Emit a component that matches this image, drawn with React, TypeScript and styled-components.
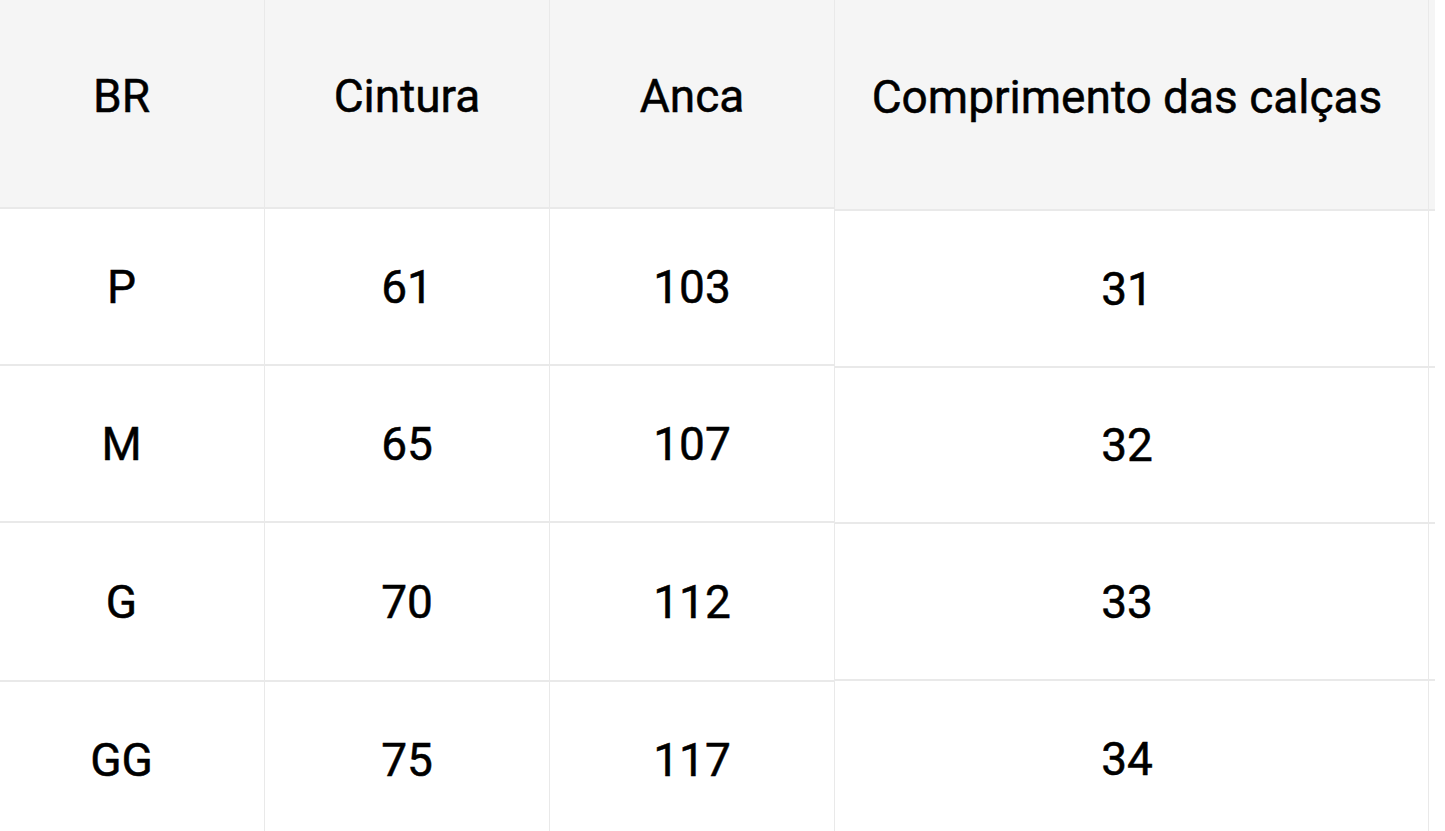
import React from "react";
import styled, { createGlobalStyle } from "styled-components";

const Global = createGlobalStyle`
  html, body { margin: 0; padding: 0; background: #ffffff; overflow: hidden; }
  body { font-family: Roboto, "Noto Sans", "Liberation Sans", sans-serif; }
`;

const Page = styled.div`
  display: flex;
  align-items: flex-start;
  width: 1445px;
  height: 831px;
  overflow: hidden;
`;

const Table = styled.div<{ $cols: string; $rows: string; $shift?: number }>`
  display: grid;
  grid-template-columns: ${(p) => p.$cols};
  grid-template-rows: ${(p) => p.$rows};
  margin-left: ${(p) => p.$shift ?? 0}px;
  flex-shrink: 0;
`;

const Cell = styled.div<{ $head?: boolean; $noRight?: boolean; $padRight?: number }>`
  display: flex;
  align-items: center;
  justify-content: center;
  box-sizing: border-box;
  background: ${(p) => (p.$head ? "#f5f5f5" : "#ffffff")};
  border-right: ${(p) => (p.$noRight ? "none" : "2px solid #e9e9e9")};
  border-bottom: 2px solid #e9e9e9;
  padding-bottom: ${(p) => (p.$head ? "16px" : "0")};
  padding-right: ${(p) => p.$padRight ?? 0}px;
  margin-right: -1px;
  font-size: 46px;
  font-weight: 400;
  color: #000000;
  white-space: nowrap;
  -webkit-text-stroke: 0.5px #000000;
`;

const sizes = ["P", "M", "G", "GG"];
const waist = ["61", "65", "70", "75"];
const hip = ["103", "107", "112", "117"];
const length = ["31", "32", "33", "34"];

export default function App() {
  return (
    <Page>
      <Global />
      <Table $cols="286px 285px 285px" $rows="209px 157px 157px 159px 157px" $shift={-21}>
        <Cell $head>BR</Cell>
        <Cell $head>Cintura</Cell>
        <Cell $head>Anca</Cell>
        {sizes.map((s, i) => (
          <React.Fragment key={s}>
            <Cell>{s}</Cell>
            <Cell>{waist[i]}</Cell>
            <Cell>{hip[i]}</Cell>
          </React.Fragment>
        ))}
      </Table>
      <Table $cols="594px 5px" $rows="211px 157px 156px 157px 157px">
        <Cell $head $padRight={9}>Comprimento das calças</Cell>
        <Cell $head $noRight />
        {length.map((l) => (
          <React.Fragment key={l}>
            <Cell $padRight={9}>{l}</Cell>
            <Cell $noRight />
          </React.Fragment>
        ))}
      </Table>
    </Page>
  );
}
